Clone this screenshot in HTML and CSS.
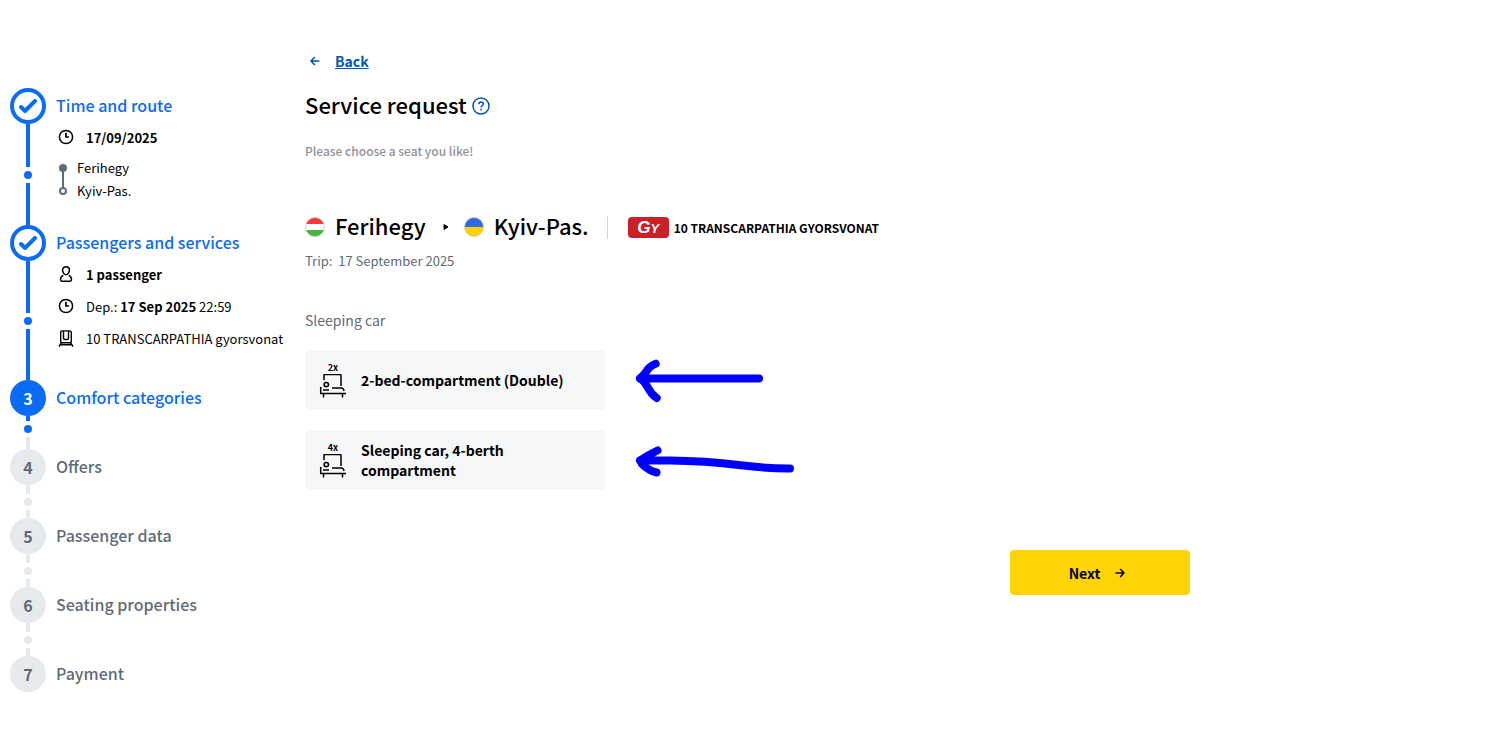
FILE: index.html
```html
<!DOCTYPE html>
<html lang="en">
<head>
  <meta charset="UTF-8" />
  <meta name="viewport" content="width=device-width, initial-scale=1" />
  <title>Service request</title>
  <link rel="stylesheet" href="styles.css">
</head>
<body>
  <!-- Shared icons -->
  <svg class="sprite" aria-hidden="true">
    <symbol id="check" viewBox="0 0 18 14">
      <path d="M2 8l4 4L16 2" fill="none" stroke="currentColor" stroke-width="4" stroke-linecap="round" stroke-linejoin="round" />
    </symbol>
    <symbol id="clock" viewBox="0 0 16 16">
      <circle cx="8" cy="8" r="6.6" fill="none" stroke="currentColor" stroke-width="1.5" />
      <path d="M8 3.8V8h3" fill="none" stroke="currentColor" stroke-width="1.7" />
    </symbol>
    <symbol id="bed" viewBox="0 0 28 24">
      <g fill="none" stroke="currentColor" stroke-width="1.5">
        <path d="M5 6V1.500q0-1 1-1h15q1 0 1 1V12" />
        <circle cx="7.3" cy="10.600" r="2.200" />
        <path d="M1.700 13v7M1 19.500h26M4.500 20v3.500M23.500 20v3.500M4 16h6M13 14h9.500q2 0 2.500 3" />
      </g>
    </symbol>
  </svg>

  <div class="page">
    <ol class="steps">
      <li class="step done">
        <div class="rail">
          <span class="badge"><svg width="18" height="14"><use href="#check" /></svg></span>
          <span class="line"></span><span class="dot"></span><span class="line"></span>
        </div>
        <div class="step-body">
          <h2>Time and route</h2>
          <p class="detail"><svg width="16" height="16"><use href="#clock" /></svg><b>17/09/2025</b></p>
          <div class="stations">
            <svg width="8" height="32" viewBox="0 0 8 32">
              <path d="M4 4v21" stroke="#5f6b77" stroke-width="2" />
              <circle cx="4" cy="5" r="4" fill="#5f6b77" />
              <circle cx="4" cy="28" r="3" fill="#fff" stroke="#5f6b77" stroke-width="2" />
            </svg>
            <p>Ferihegy<br>Kyiv-Pas.</p>
          </div>
        </div>
      </li>
      <li class="step done">
        <div class="rail">
          <span class="badge"><svg width="18" height="14"><use href="#check" /></svg></span>
          <span class="line"></span><span class="dot"></span><span class="line"></span>
        </div>
        <div class="step-body">
          <h2>Passengers and services</h2>
          <p class="detail">
            <svg width="16" height="16" viewBox="0 0 16 16" fill="none" stroke="currentColor" stroke-width="1.500">
              <path d="M8 .8c2.200 0 3.400 1.400 3.400 3.400S10 8.700 8 8.700 4.600 6.200 4.600 4.200 5.800.8 8 .8z" />
              <path d="M5.300 9.200C3.300 10.200 2.500 12 2.500 13.500q0 1.700 1.500 1.700h8q1.500 0 1.500-1.700c0-1.500-.8-3.300-2.800-4.300" />
            </svg>
            <b>1 passenger</b>
          </p>
          <p class="detail"><svg width="16" height="16"><use href="#clock" /></svg><span>Dep.: <b>17 Sep 2025</b> 22:59</span></p>
          <p class="detail">
            <svg width="16" height="17" viewBox="0 0 16 17" fill="none" stroke="currentColor" stroke-width="1.400">
              <path d="M2.700 11.500V2.700Q2.700.9 4.500.9h7q1.800 0 1.800 1.800v8.800q0 1.200-1.200 1.200H3.900q-1.200 0-1.200-1.200z" />
              <path d="M5.500 1v7q0 1.500 1.500 1.500h2q1.500 0 1.500-1.500V1M3.500 12.700L1 16.500M12.500 12.700l2.500 3.800M2.500 14.700h11" />
            </svg>
            <span>10 TRANSCARPATHIA gyorsvonat</span>
          </p>
        </div>
      </li>
      <li class="step current">
        <div class="rail">
          <span class="badge">3</span>
          <span class="line"></span><span class="dot"></span><span class="line"></span>
        </div>
        <h2>Comfort categories</h2>
      </li>
      <li class="step">
        <div class="rail">
          <span class="badge">4</span>
          <span class="line"></span><span class="dot"></span><span class="line"></span>
        </div>
        <h2>Offers</h2>
      </li>
      <li class="step">
        <div class="rail">
          <span class="badge">5</span>
          <span class="line"></span><span class="dot"></span><span class="line"></span>
        </div>
        <h2>Passenger data</h2>
      </li>
      <li class="step">
        <div class="rail">
          <span class="badge">6</span>
          <span class="line"></span><span class="dot"></span><span class="line"></span>
        </div>
        <h2>Seating properties</h2>
      </li>
      <li class="step">
        <div class="rail"><span class="badge">7</span></div>
        <h2>Payment</h2>
      </li>
    </ol>

    <main>
      <a class="back" href="#">
        <svg width="10" height="10" viewBox="0 0 10 10" fill="none" stroke="currentColor" stroke-width="1.600"><path d="M9.500 5H1M4.800 1L1 5l3.800 4" /></svg>
        <span>Back</span>
      </a>

      <div class="title">
        <h1>Service request</h1>
        <button type="button" class="help" aria-label="Help">
          <svg width="18" height="18" viewBox="0 0 18 18" fill="none" stroke="currentColor" stroke-width="1.500">
            <circle cx="9" cy="9" r="8" />
            <path d="M6.800 7.200c0-1.500 1-2.300 2.300-2.300s2.200.8 2.200 2c0 1.600-2.200 1.700-2.200 3.600M9.100 11.800v1.600" />
          </svg>
        </button>
      </div>
      <p class="hint">Please choose a seat you like!</p>

      <div class="route">
        <svg class="flag" width="20" height="20" viewBox="0 0 20 20">
          <clipPath id="round"><circle cx="10" cy="10" r="9.500" /></clipPath>
          <g clip-path="url(#round)">
            <path d="M0 0h20v7H0z" fill="#f93939" />
            <path d="M0 7h20v6H0z" fill="#fff" />
            <path d="M0 13h20v7H0z" fill="#49b53c" />
          </g>
          <circle cx="10" cy="10" r="9.500" fill="none" stroke="#c4c8cb" stroke-width=".8" />
        </svg>
        <span class="city">Ferihegy</span>
        <svg class="to" width="6" height="8" viewBox="0 0 6 8"><path d="M1 1.500v5L5 4z" stroke="#000" stroke-linejoin="round" /></svg>
        <svg class="flag" width="20" height="20" viewBox="0 0 20 20">
          <g clip-path="url(#round)">
            <path d="M0 0h20v10H0z" fill="#2f6be0" />
            <path d="M0 10h20v10H0z" fill="#ffd200" />
          </g>
          <circle cx="10" cy="10" r="9.500" fill="none" stroke="#c4c8cb" stroke-width=".8" />
        </svg>
        <span class="city">Kyiv-Pas.</span>
        <span class="train"><span class="gy">G<small>Y</small></span>10 TRANSCARPATHIA GYORSVONAT</span>
      </div>
      <p class="trip">Trip:&nbsp; 17 September 2025</p>

      <h3>Sleeping car</h3>
      <div class="option">
        <button type="button" class="card">
          <span class="beds">2x<svg width="28" height="24"><use href="#bed" /></svg></span>
          <span>2-bed-compartment (Double)</span>
        </button>
        <svg class="arrow" width="170" height="60" viewBox="0 0 170 60">
          <path d="M129 28.500H10M25.700 13.700Q19.500 16 16 22Q14 25 10 28.500M12 30Q15 32 17.500 37Q21 44 26.700 48" />
        </svg>
      </div>
      <div class="option">
        <button type="button" class="card">
          <span class="beds">4x<svg width="28" height="24"><use href="#bed" /></svg></span>
          <span>Sleeping car, 4-berth compartment</span>
        </button>
        <svg class="arrow" width="170" height="60" viewBox="0 0 170 60">
          <path d="M160 38.500C117 39 104 31 40 30.500H10M27.500 20.500Q18 25 10 30.500M12 34Q19 41 26.500 42.500" />
        </svg>
      </div>

      <button type="button" class="next">
        Next
        <svg width="10" height="10" viewBox="0 0 10 10" fill="none" stroke="currentColor" stroke-width="1.600"><path d="M.5 5H9M5.200 1L9 5 5.200 9" /></svg>
      </button>
    </main>
  </div>
</body>
</html>
```
FILE: styles.css
```css
* {
  box-sizing: border-box;
}
body {
  margin: 0;
  background: #fff;
  color: #000;
  font-family: "Noto Sans CJK SC", "Noto Sans", sans-serif;
  font-size: 13px;
}
h1, h2, h3, p, ol {
  margin: 0;
  padding: 0;
}
button {
  font-family: inherit;
  color: inherit;
  border: none;
  cursor: pointer;
}
svg {
  flex: none;
}
.sprite {
  display: none;
}
.page {
  display: flex;
  max-width: 1200px;
  padding: 46px 10px;
}

/* Steps */
.steps {
  flex: 0 0 295px;
  list-style: none;
  padding-top: 42px;
}
.step {
  display: flex;
  gap: 10px;
  min-height: 69px;
  color: #5f6b77;
}
.step:last-child {
  min-height: 36px;
}
.rail {
  display: flex;
  flex-direction: column;
  align-items: center;
  color: #e6eaed;
}
.badge {
  display: flex;
  align-items: center;
  justify-content: center;
  width: 36px;
  height: 36px;
  border-radius: 50%;
  background: #e6eaed;
  color: #5f6b77;
  font-size: 16px;
  font-weight: bold;
  line-height: 34px;
}
.line {
  flex: 1;
  width: 4px;
  background: currentColor;
}
.dot {
  width: 8px;
  height: 8px;
  margin: 4px 0;
  border-radius: 50%;
  background: currentColor;
}
.step h2 {
  padding-bottom: 2px;
  font-size: 16px;
  font-weight: 500;
  line-height: 34px;
}
.done h2, .current h2, .done .rail, .current .rail {
  color: #0a6cf5;
}
.done .badge {
  border: 4px solid #0a6cf5;
  background: #fff;
  color: #0a6cf5;
}
.current .badge {
  background: #0a6cf5;
  color: #fff;
}
.current .line {
  flex: 0 0 5px;
}
.current .line:last-child {
  flex: 1;
  background: #e6eaed;
}
.step-body {
  padding-bottom: 23px;
  color: #000;
  white-space: nowrap;
}
.detail {
  display: flex;
  align-items: center;
  gap: 12px;
  height: 26px;
  margin: 0 0 6px 2px;
}
.stations {
  display: flex;
  align-items: center;
  gap: 10px;
  margin-left: 3px;
  line-height: 23px;
}

/* Content */
main {
  display: flex;
  flex: 1;
  flex-direction: column;
  align-items: flex-start;
}
.back {
  display: flex;
  align-items: center;
  gap: 15px;
  margin-left: 5px;
  color: #0055b8;
  font-size: 14px;
  font-weight: bold;
  line-height: 30px;
  text-decoration: none;
}
.back span {
  text-decoration: underline;
}
.title {
  display: flex;
  align-items: center;
  gap: 5px;
  margin-top: 12px;
}
h1 {
  padding-bottom: 4px;
  font-size: 22px;
  font-weight: 500;
  line-height: 32px;
}
.help {
  display: flex;
  padding: 0;
  background: none;
  color: #0055b8;
}
.hint {
  margin-top: 17px;
  color: #8e9399;
  font-size: 12px;
  font-weight: 500;
  line-height: 20px;
}
.route {
  display: flex;
  align-items: center;
  margin-top: 50px;
}
.city {
  margin-left: 10px;
  padding-bottom: 3px;
  font-size: 22px;
  font-weight: 500;
  line-height: 29px;
}
.to {
  margin: 0 15px 0 17px;
}
.train {
  display: flex;
  align-items: center;
  gap: 5px;
  height: 23px;
  margin-left: 18px;
  padding-left: 20px;
  border-left: 1px solid #d3d6d9;
  font-size: 12px;
  font-weight: bold;
}
.gy {
  width: 41px;
  height: 21px;
  border-radius: 4px;
  background: #cb2027;
  color: #fff;
  font-family: "Liberation Sans", sans-serif;
  font-size: 17px;
  font-style: italic;
  line-height: 22px;
  text-align: center;
}
.gy small {
  font-size: 13px;
}
.trip {
  margin-top: 8px;
  color: #5f6b77;
  line-height: 20px;
}
h3 {
  margin: 39px 0 20px;
  color: #5f6b77;
  font-size: 14px;
  font-weight: normal;
  line-height: 20px;
}
.option {
  display: flex;
  gap: 25px;
  margin-bottom: 20px;
}
.card {
  display: flex;
  align-items: center;
  gap: 14px;
  width: 300px;
  height: 60px;
  padding: 0 14px;
  border-radius: 4px;
  background: #f5f7f9;
  font-size: 14px;
  font-weight: bold;
  line-height: 20px;
  text-align: left;
}
.beds {
  display: flex;
  flex-direction: column;
  align-items: center;
  font-size: 9px;
  line-height: 12px;
}
.arrow {
  fill: none;
  stroke: #00f;
  stroke-width: 8;
  stroke-linecap: round;
  stroke-linejoin: round;
}
.next {
  display: flex;
  align-items: center;
  justify-content: center;
  gap: 15px;
  align-self: flex-end;
  width: 180px;
  height: 45px;
  margin-top: 40px;
  padding: 0 12px 0 6px;
  border-radius: 4px;
  background: #ffd405;
  font-size: 14px;
  font-weight: bold;
}
```
